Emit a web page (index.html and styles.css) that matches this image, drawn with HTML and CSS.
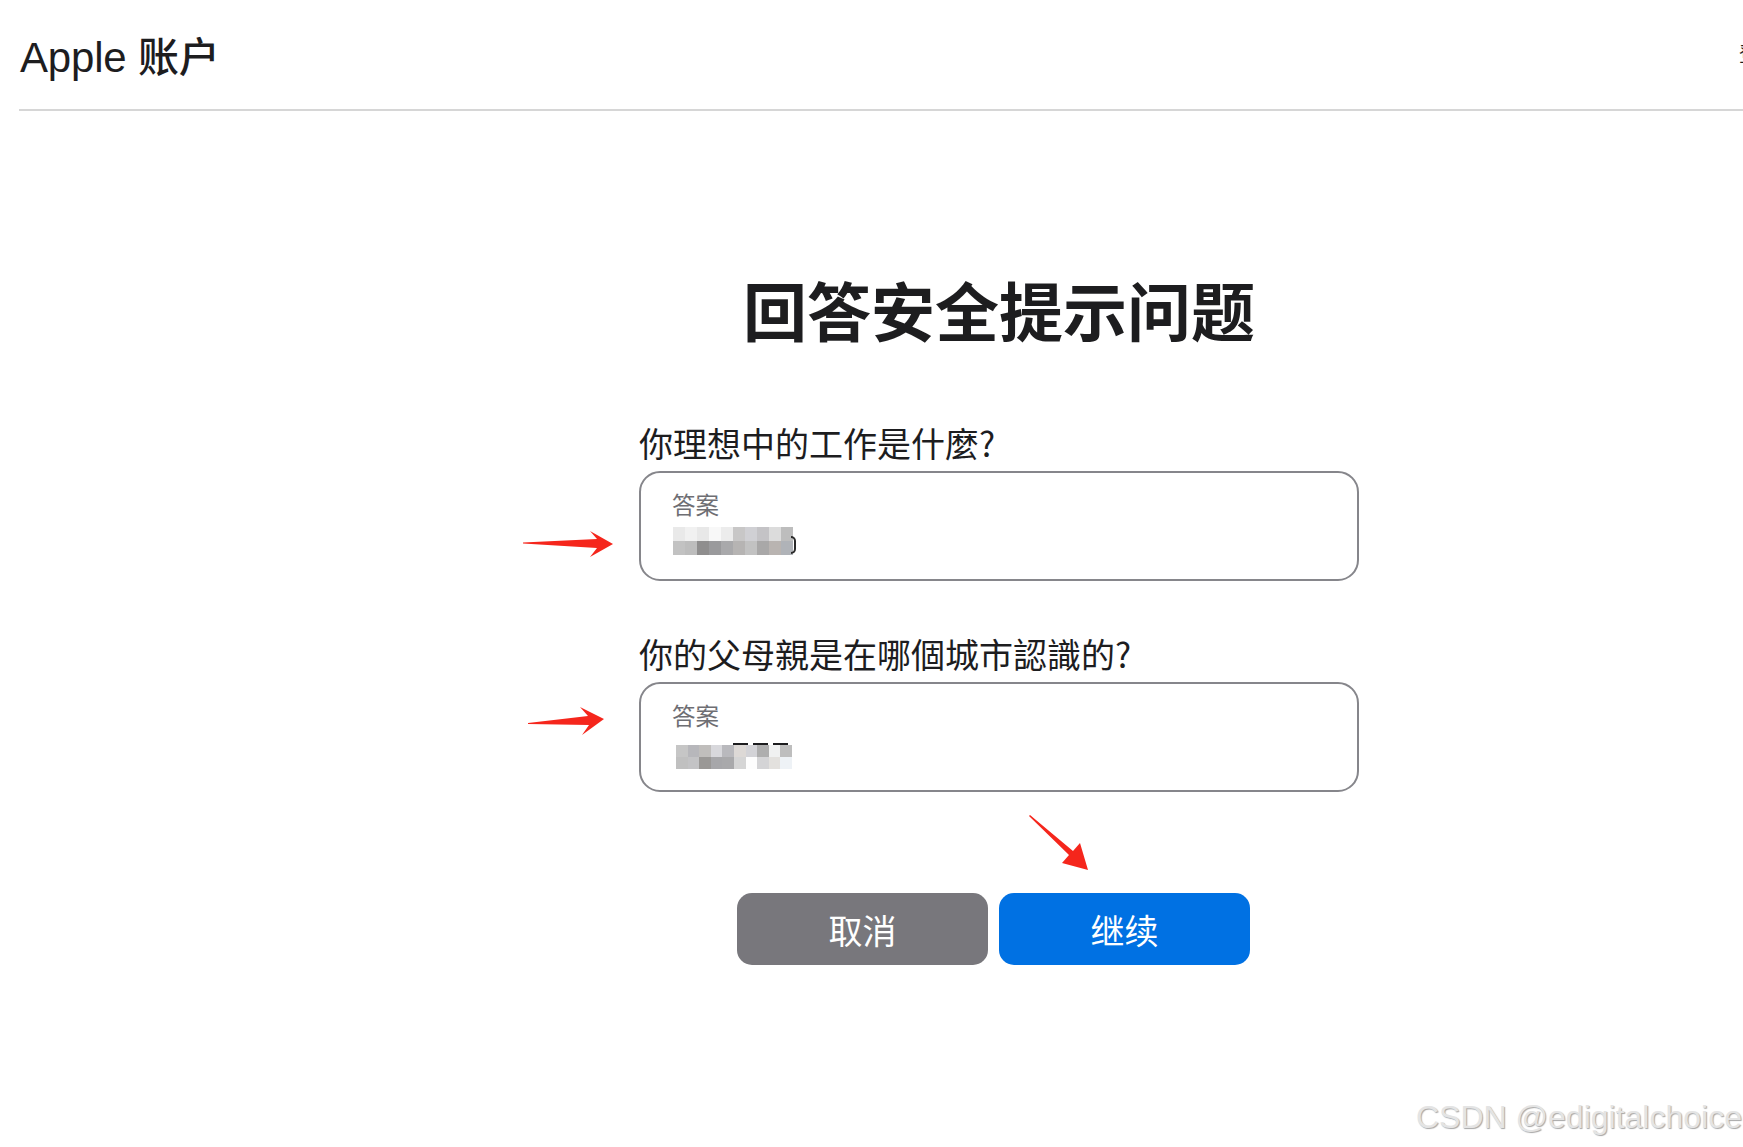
FILE: index.html
```html
<!DOCTYPE html>
<html lang="zh-CN">
<head>
<meta charset="utf-8">
<title>Apple 账户</title>
<link rel="stylesheet" href="styles.css">
</head>
<body>
<div class="page">
  <header class="topbar">
    <div class="brand">Apple <span class="brand-cjk">账户</span></div>
    <div class="edge">登录</div>
  </header>

  <main class="content">
    <h1 class="title">回答安全提示问题</h1>

    <div class="question">
      <div class="q-label">你理想中的工作是什麼?</div>
      <div class="field">
        <div class="f-label">答案</div>
        <div class="mosaic mosaic-a"><div class="row r1"></div><div class="row r2"></div></div>
      </div>
    </div>

    <div class="question">
      <div class="q-label">你的父母親是在哪個城市認識的?</div>
      <div class="field">
        <div class="f-label">答案</div>
        <div class="mosaic mosaic-b"><div class="row r1"></div><div class="row r2"></div></div>
      </div>
    </div>

    <div class="actions">
      <button class="btn btn-cancel">取消</button>
      <button class="btn btn-continue">继续</button>
    </div>
  </main>

  <svg class="annot" width="1743" height="1147" viewBox="0 0 1743 1147" xmlns="http://www.w3.org/2000/svg">
    <polygon fill="#f5261c" points="523,542.5 597,539 590,531 613,544 590,557 597,548 523,543.5"/>
    <polygon fill="#f5261c" points="528,723 588,716 580,707 604,719 582,735 589,725 528,724"/>
    <polygon fill="#f5261c" points="1030,815 1073,851 1080,843 1088,870 1062,863 1069,855 1029,816"/>
  </svg>

  <div class="watermark">CSDN @edigitalchoice</div>
</div>
</body>
</html>
```

FILE: styles.css
```css
html, body {
  margin: 0;
  padding: 0;
  background: #ffffff;
}

body {
  font-family: "Liberation Sans", "Noto Sans CJK SC", sans-serif;
  color: #1d1d1f;
  overflow: hidden;
}

.page {
  position: relative;
  width: 1743px;
  height: 1147px;
  overflow: hidden;
}

.topbar {
  margin-left: 19px;
  height: 109px;
  border-bottom: 2px solid #d6d6d6;
  display: flex;
  justify-content: space-between;
  align-items: flex-start;
  overflow: hidden;
}

.brand {
  margin-top: 30px;
  margin-left: 1px;
  font-size: 42px;
  line-height: 48px;
  font-weight: 400;
  letter-spacing: -0.2px;
  color: #1d1d1f;
}

.brand-cjk {
  font-family: "Noto Sans CJK SC", sans-serif;
  font-weight: 500;
  font-size: 41px;
}

.edge {
  margin-top: 40px;
  width: 4px;
  overflow: hidden;
  white-space: nowrap;
  font-family: "Noto Sans CJK SC", sans-serif;
  font-size: 20px;
  line-height: 28px;
  color: #1d1d1f;
}

.content {
  margin-left: 639px;
  width: 720px;
  display: flex;
  flex-direction: column;
}

.title {
  margin: 159px 0 0 0;
  font-family: "Noto Sans CJK SC", sans-serif;
  font-size: 64px;
  line-height: 76px;
  font-weight: 700;
  text-align: center;
  color: #1d1d1f;
}

.question {
  display: flex;
  flex-direction: column;
}

.question:first-of-type {
  margin-top: 77px;
}

.question + .question {
  margin-top: 53px;
}

.q-label {
  font-family: "Noto Sans CJK SC", sans-serif;
  font-size: 34px;
  line-height: 40px;
  color: #1d1d1f;
  margin-bottom: 8px;
}

.field {
  box-sizing: border-box;
  height: 110px;
  border: 2px solid #86868b;
  border-radius: 21px;
  padding: 16px 0 0 31px;
}

.f-label {
  font-family: "Noto Sans CJK SC", sans-serif;
  font-size: 23.5px;
  line-height: 30px;
  color: #6e6e73;
}

.mosaic {
  position: relative;
  width: 120px;
}

.mosaic-a {
  margin-top: 8px;
  margin-left: 1px;
}

.mosaic-a .row {
  height: 14px;
}

.mosaic-a .r1 {
  background: linear-gradient(to right,
    #e9e9e9 0 12px, #f1f1f1 12px 24px, #e8e8e8 24px 36px, #f8f8f8 36px 48px,
    #ececec 48px 60px, #c8c7c7 60px 72px, #d0d0d4 72px 84px, #c4c3c6 84px 96px,
    #dcdcdc 96px 108px, #bdbdbd 108px 120px);
}

.mosaic-a .r2 {
  background: linear-gradient(to right,
    #c2c2c2 0 12px, #bdbdbd 12px 24px, #8f8e8e 24px 36px, #9a9a9c 36px 48px,
    #a9a9ab 48px 60px, #b6b4b3 60px 72px, #c2c2c2 72px 84px, #a9a8a8 84px 96px,
    #b9b4b1 96px 108px, #b0b3b8 108px 120px);
}

.mosaic-a::after {
  content: "";
  position: absolute;
  left: 118px;
  top: 9px;
  width: 5px;
  height: 18px;
  border: 2.5px solid #2a2a2a;
  border-left: none;
  border-radius: 0 8px 8px 0;
  box-sizing: border-box;
}

.mosaic-b {
  margin-top: 15px;
  margin-left: 4px;
  width: 116px;
}

.mosaic-b::before {
  content: "";
  position: absolute;
  left: 57px;
  top: -2px;
  width: 57px;
  height: 2px;
  background: linear-gradient(to right,
    #1d1d1f 0 15px, transparent 15px 20px, #1d1d1f 20px 35px,
    transparent 35px 40px, #1d1d1f 40px 55px, transparent 55px);
}

.mosaic-b .row {
  height: 12px;
}

.mosaic-b .r1 {
  background: linear-gradient(to right,
    #c6c6c6 0 12px, #b7b7bb 12px 23px, #c0bebc 23px 35px, #d8d8dc 35px 46px,
    #b9b9bd 46px 58px, #ddd9d6 58px 70px, #d3d3d7 70px 81px, #aeaeae 81px 93px,
    #f0f1f1 93px 104px, #bebebe 104px 116px);
}

.mosaic-b .r2 {
  background: linear-gradient(to right,
    #c0c0c0 0 12px, #c3c3c5 12px 23px, #9a9896 23px 35px, #a7a7aa 35px 46px,
    #a9a9ab 46px 58px, #d5d5d5 58px 70px, #fdfdfd 70px 81px, #d4d4d6 81px 93px,
    #e3e1de 93px 104px, #eef2f6 104px 116px);
}

.actions {
  margin-top: 101px;
  margin-left: 98px;
  display: flex;
  gap: 11px;
}

.btn {
  width: 251px;
  height: 72px;
  border: none;
  border-radius: 15px;
  font-family: "Noto Sans CJK SC", sans-serif;
  font-size: 34px;
  font-weight: 400;
  color: #ffffff;
  padding: 0;
  cursor: pointer;
}

.btn-cancel {
  background: #78777c;
}

.btn-continue {
  background: #0071e3;
}

.annot {
  position: absolute;
  left: 0;
  top: 0;
  pointer-events: none;
}

.watermark {
  position: absolute;
  left: 1416px;
  top: 1097px;
  font-family: "Liberation Sans", sans-serif;
  font-size: 32px;
  line-height: 40px;
  white-space: nowrap;
  color: #e4e4e4;
  text-shadow: 1px 1px 1px rgba(0, 0, 0, 0.35);
}
```
